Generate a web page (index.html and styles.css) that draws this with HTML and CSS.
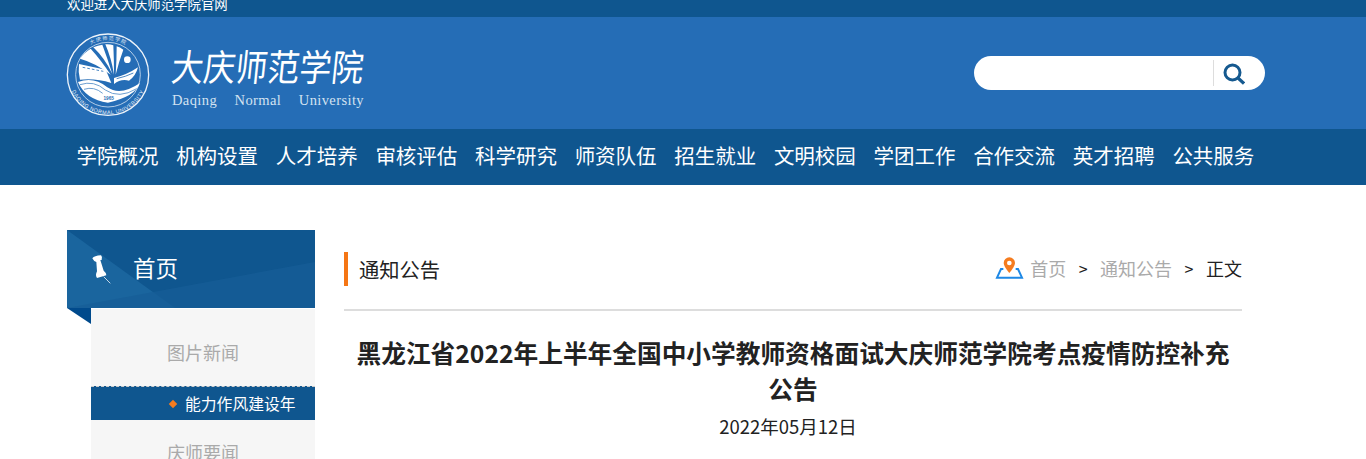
FILE: index.html
```html
<!DOCTYPE html>
<html lang="zh-CN">
<head>
    <meta charset="UTF-8">
    <title>大庆师范学院</title>
    <link rel="stylesheet" href="styles.css">
</head>
<body>
    <div class="topbar">欢迎进入大庆师范学院官网</div>

    <div class="header">
        <div class="logo">
            <svg class="seal" width="86" height="86" viewBox="6 6 258 258">
                <circle cx="132" cy="140" r="122" fill="none" stroke="#eef4fa" stroke-width="4"/>
                <circle cx="132" cy="140" r="97" fill="none" stroke="#cfe0f0" stroke-width="2.500"/>
                <path id="sealTop" d="M28 140A104 104 0 0 1 236 140" fill="none"/>
                <path id="sealBottom" d="M13 140A119 119 0 0 0 251 140" fill="none"/>
                <text class="seal-text" text-anchor="middle"><textPath href="#sealTop" startOffset="50%">大 庆 师 范 学 院</textPath></text>
                <text class="seal-text en" text-anchor="middle"><textPath href="#sealBottom" startOffset="50%">DAQING NORMAL UNIVERSITY</textPath></text>
                <path d="M48 92Q62 72 80 62Q110 95 140 140Q95 105 48 92Z" fill="#fff"/>
                <path d="M88 58Q102 52 115 50Q130 90 145 138Q122 90 88 58Z" fill="#fff"/>
                <path d="M124 49Q138 48 148 52Q150 95 150 140Q142 90 124 49Z" fill="#fff"/>
                <path d="M158 55Q168 58 178 65Q165 100 155 140Q158 95 158 55Z" fill="#fff"/>
                <circle cx="190" cy="95" r="10" fill="#fff"/>
                <path d="M45 108L125 125Q132 140 142 165Q95 150 48 155Q42 130 45 108Z" fill="#fff"/>
                <path d="M56 118L118 130" stroke="#256db6" stroke-width="2.500" stroke-dasharray="8 6"/>
                <path d="M150 150Q190 140 222 118Q215 145 195 158Q170 152 150 168Z" fill="#fff"/>
                <path d="M158 152Q185 146 208 135" fill="none" stroke="#256db6" stroke-width="2.500"/>
                <path d="M42 162Q90 145 130 178Q170 205 228 165Q215 205 132 224Q65 215 42 162Z" fill="#fff"/>
                <path d="M48 170Q90 156 124 186Q165 214 218 182" fill="none" stroke="#6d9fd0" stroke-width="3"/>
                <path d="M60 184Q90 174 116 196" fill="none" stroke="#6d9fd0" stroke-width="3"/>
                <text class="seal-year" x="134" y="217">1965</text>
            </svg>
            <div class="logo-name">
                <div class="logo-cn">大庆师范学院</div>
                <div class="logo-en"><span>Daqing</span><span>Normal</span><span>University</span></div>
            </div>
        </div>
        <div class="search">
            <input class="search-input" type="text">
            <span class="search-btn">
                <svg width="22" height="22" viewBox="0 0 22 22">
                    <circle cx="9.500" cy="9.500" r="7.500" fill="none" stroke="#15598f" stroke-width="3"/>
                    <path d="M15 15L21 20.500" stroke="#15598f" stroke-width="3.200"/>
                </svg>
            </span>
        </div>
    </div>

    <div class="nav">
        <a>学院概况</a>
        <a>机构设置</a>
        <a>人才培养</a>
        <a>审核评估</a>
        <a>科学研究</a>
        <a>师资队伍</a>
        <a>招生就业</a>
        <a>文明校园</a>
        <a>学团工作</a>
        <a>合作交流</a>
        <a>英才招聘</a>
        <a>公共服务</a>
    </div>

    <div class="content">
        <div class="sidebar">
            <div class="side-head">
                <svg class="side-bg" width="248" height="78" viewBox="0 0 248 78">
                    <path d="M0 0L108 78H0Z" fill="#1a659e"/>
                    <path d="M0 78L248 32V78Z" fill="#175e97" opacity=".75"/>
                </svg>
                <svg class="pin" width="22" height="30" viewBox="20 12 66 90">
                    <path d="M24 25Q30 17 50 16Q56 22 52 30L48 30L58 62Q66 68 66 76L38 84Q32 76 38 64L36 36Q28 34 24 25Z" fill="#fff"/>
                    <path d="M58 80L78 100" stroke="#c3d6e6" stroke-width="3"/>
                </svg>
                <span class="side-title">首页</span>
            </div>
            <div class="side-menu">
                <div class="side-item">图片新闻</div>
                <div class="side-sub"><i class="dot"></i>能力作风建设年</div>
                <div class="side-item">庆师要闻</div>
            </div>
        </div>

        <div class="main">
            <div class="main-head">
                <div class="main-title">通知公告</div>
                <div class="crumbs">
                    <svg class="crumb-icon" width="30" height="23" viewBox="15 16 90 69">
                        <path d="M40 52H33L21 78H96L84 52H77" fill="none" stroke="#1e88e5" stroke-width="6"/>
                        <path d="M58 64Q41 44 41 34A17 17 0 0 1 75 34Q75 44 58 64Z" fill="#f57c1f"/>
                        <circle cx="58" cy="34" r="7" fill="#fff"/>
                    </svg>
                    <a>首页</a><b>&gt;</b><a>通知公告</a><b>&gt;</b><span>正文</span>
                </div>
            </div>
            <h1 class="article-title">黑龙江省2022年上半年全国中小学教师资格面试大庆师范学院考点疫情防控补充公告</h1>
            <div class="article-date">2022年05月12日</div>
        </div>
    </div>
</body>
</html>
```
FILE: styles.css
```css
html, body {
    margin: 0;
    height: 459px;
    overflow: hidden;
}
body {
    font-family: "Noto Sans CJK SC", "Liberation Sans", sans-serif;
    background: #fff;
    color: #222;
}
.topbar {
    height: 17px;
    line-height: 7px;
    padding-left: 67px;
    overflow: hidden;
    background: #0f568f;
    color: #fff;
    font-size: 13.400px;
}
.header {
    height: 112px;
    padding: 0 101px 0 66px;
    display: flex;
    align-items: center;
    justify-content: space-between;
    background: #256db6;
}
.logo {
    display: flex;
    align-items: center;
    gap: 20px;
}
.seal-text {
    font-size: 15px;
    fill: #e8f0f8;
}
.seal-text.en {
    font-size: 16px;
    letter-spacing: 1.500px;
    font-family: "Liberation Sans", sans-serif;
}
.seal-year {
    font-size: 14px;
    font-weight: bold;
    fill: #256db6;
    text-anchor: middle;
    font-family: "Liberation Sans", sans-serif;
}
.logo-name {
    width: 192px;
    padding-top: 4px;
}
.logo-cn {
    font-size: 32px;
    line-height: 44px;
    color: #fff;
    white-space: nowrap;
    transform: skewX(-6deg) scaleY(1.15);
}
.logo-en {
    display: flex;
    justify-content: space-between;
    margin-top: 5px;
    font-family: "Liberation Serif", serif;
    font-size: 14.500px;
    line-height: 16px;
    letter-spacing: .4px;
    color: #d3e2f1;
}
.search {
    width: 291px;
    height: 34px;
    display: flex;
    align-items: center;
    border-radius: 17px;
    background: #fff;
}
.search-input {
    width: 240px;
    height: 26px;
    padding: 0;
    border: 0;
    border-right: 1px solid #ddd;
    outline: none;
    background: none;
    box-sizing: border-box;
}
.search-btn {
    display: flex;
    margin: 2px 0 0 9px;
}
.nav {
    height: 52px;
    padding: 0 0 4px 76.500px;
    display: flex;
    align-items: center;
    gap: 17.640px;
    background: #0f568f;
}
.nav a {
    color: #fff;
    font-size: 20.500px;
    white-space: nowrap;
}
.content {
    padding: 45px 0 0 67px;
    display: flex;
    gap: 29px;
}
.sidebar {
    width: 248px;
}
.side-head {
    position: relative;
    height: 78px;
    display: flex;
    align-items: center;
    background: #0f568f;
}
.side-head::after {
    content: "";
    position: absolute;
    left: 0;
    top: 78px;
    border-top: 16px solid #004a8c;
    border-left: 24px solid transparent;
}
.side-bg {
    position: absolute;
    left: 0;
    top: 0;
}
.pin {
    position: relative;
    margin-left: 24px;
}
.side-title {
    position: relative;
    margin-left: 20px;
    padding-bottom: 4px;
    font-size: 22.500px;
    color: #fff;
}
.side-menu {
    margin: 1px 0 0 24px;
    padding-top: 11px;
    background: #f6f6f6;
}
.side-item {
    height: 66px;
    line-height: 65px;
    text-align: center;
    font-size: 18px;
    color: #aaa;
}
.side-sub {
    height: 33px;
    line-height: 33px;
    padding-left: 94px;
    border-top: 1px dashed #ccc;
    position: relative;
    background: #0f568f;
    color: #fff;
    font-size: 15.800px;
}
.dot {
    position: absolute;
    left: 79px;
    top: 14px;
    width: 6px;
    height: 6px;
    background: #f57c1f;
    transform: rotate(45deg);
}
.main {
    width: 898px;
}
.main-head {
    height: 79px;
    display: flex;
    justify-content: space-between;
    align-items: flex-start;
    border-bottom: 2px solid #ddd;
}
.main-title {
    margin-top: 22px;
    height: 34px;
    line-height: 34px;
    padding-left: 11px;
    border-left: 4px solid #f57615;
    font-size: 20.300px;
}
.crumbs {
    margin-top: 21px;
    height: 34px;
    display: flex;
    align-items: center;
    font-size: 18px;
    color: #222;
}
.crumbs a {
    color: #aaa;
}
.crumbs b {
    font-weight: normal;
    margin: 0 12.500px;
    font-size: 16px;
}
.crumb-icon {
    margin-right: 5px;
}
.article-title {
    margin: 23px 0 0;
    padding: 0 10px;
    text-align: center;
    font-size: 24.700px;
    line-height: 36px;
    font-weight: bold;
}
.article-date {
    margin-top: 7px;
    padding-right: 10px;
    text-align: center;
    font-size: 18.500px;
    line-height: 26px;
}
```
